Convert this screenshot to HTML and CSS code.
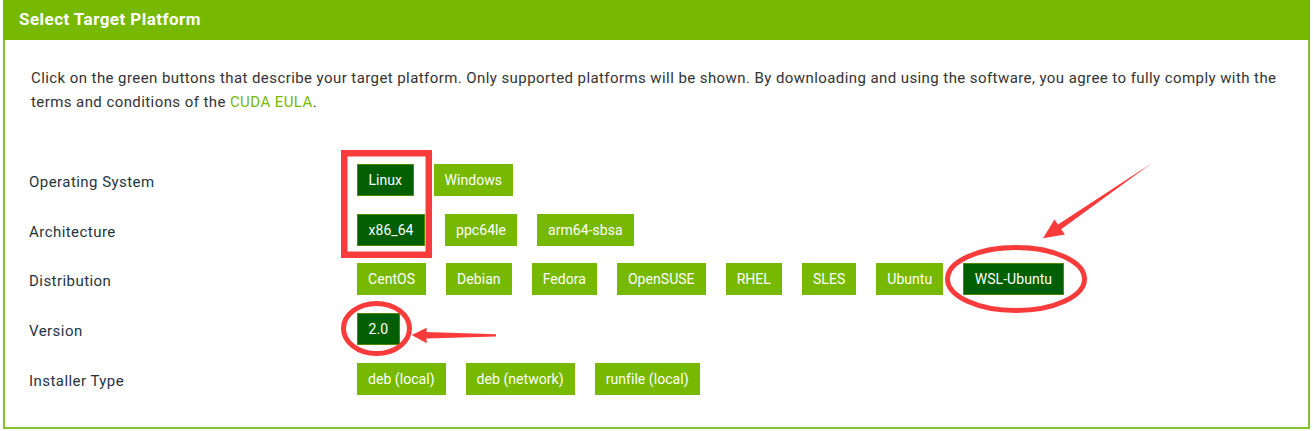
FILE: index.html
```html
<!DOCTYPE html>
<html lang="en">
<head>
<meta charset="utf-8">
<title>Select Target Platform</title>
<link rel="stylesheet" href="styles.css">
</head>
<body>
<div class="panel">
  <div class="panel-header">Select Target Platform</div>
  <div class="panel-body">
    <p class="intro">Click on the green buttons that describe your target platform. Only supported platforms will be shown. By downloading and using the software, you agree to fully comply with the terms and conditions of the <a class="link" href="#">CUDA EULA</a>.</p>
    <div class="rows">
      <div class="row">
        <div class="label">Operating System</div>
        <div class="buttons">
          <span class="btn selected">Linux</span>
          <span class="btn">Windows</span>
        </div>
      </div>
      <div class="row">
        <div class="label">Architecture</div>
        <div class="buttons">
          <span class="btn selected">x86_64</span>
          <span class="btn">ppc64le</span>
          <span class="btn">arm64-sbsa</span>
        </div>
      </div>
      <div class="row">
        <div class="label">Distribution</div>
        <div class="buttons">
          <span class="btn">CentOS</span>
          <span class="btn">Debian</span>
          <span class="btn">Fedora</span>
          <span class="btn">OpenSUSE</span>
          <span class="btn">RHEL</span>
          <span class="btn">SLES</span>
          <span class="btn">Ubuntu</span>
          <span class="btn selected">WSL-Ubuntu</span>
        </div>
      </div>
      <div class="row">
        <div class="label">Version</div>
        <div class="buttons">
          <span class="btn selected">2.0</span>
        </div>
      </div>
      <div class="row">
        <div class="label">Installer Type</div>
        <div class="buttons">
          <span class="btn">deb (local)</span>
          <span class="btn">deb (network)</span>
          <span class="btn">runfile (local)</span>
        </div>
      </div>
    </div>
  </div>
</div>
<svg class="annotations" width="1313" height="431" viewBox="0 0 1313 431">
  <rect x="344.25" y="153.25" width="84.5" height="101.5" fill="none" stroke="#f93b3b" stroke-width="6.5"/>
  <ellipse cx="1016" cy="279" rx="68.5" ry="31.5" fill="none" stroke="#f93b3b" stroke-width="5"/>
  <ellipse cx="376.5" cy="328.5" rx="33" ry="25" fill="none" stroke="#f93b3b" stroke-width="5"/>
  <polygon fill="#f93b3b" points="1152,163 1061.2,229.2 1065,234.5 1043,238.3 1054.5,219.5 1058,224.6"/>
  <polygon fill="#f93b3b" points="496,334.3 426.5,332 426.7,327.8 411.7,335 426.7,343.3 426.5,338.5 496,336.4"/>
</svg>
</body>
</html>
```
FILE: styles.css
```css
html, body {
  margin: 0;
  padding: 0;
  background: #ffffff;
}

body {
  width: 1313px;
  height: 431px;
  position: relative;
  overflow: hidden;
  font-family: Roboto, "Liberation Sans", Arial, sans-serif;
}

.panel {
  margin-left: 3px;
  width: 1303px;
  border: 2px solid #86c22e;
  border-top: none;
}

.panel-header {
  height: 40px;
  margin: 0 -2px;
  padding-left: 16px;
  background: #76b900;
  color: #ffffff;
  font-size: 17px;
  font-weight: 700;
  letter-spacing: 0.45px;
  line-height: 38px;
  box-sizing: border-box;
}

.panel-body {
  padding: 26px 24px 23px 24px;
}

.intro {
  margin: 0 0 0 2px;
  font-size: 15px;
  line-height: 24px;
  letter-spacing: 0.42px;
  color: #333333;
}

.link {
  color: #76b900;
  text-decoration: none;
}

.rows {
  margin-top: 41px;
}

.row {
  display: flex;
  align-items: center;
  height: 49.75px;
}

.label {
  width: 328px;
  flex: none;
  padding-top: 4px;
  font-size: 15px;
  letter-spacing: 0.45px;
  color: #1f3440;
}

.buttons {
  display: flex;
  gap: 20px;
}

.btn {
  display: inline-flex;
  align-items: center;
  height: 32px;
  padding: 0 11px;
  box-sizing: border-box;
  background: #76b900;
  color: #ffffff;
  font-size: 14px;
  letter-spacing: 0.05px;
}

.btn.selected {
  background: #005f00;
  border: 1px solid #4f8a00;
  padding: 0 10.5px;
}

.annotations {
  position: absolute;
  top: 0;
  left: 0;
  pointer-events: none;
}
```
